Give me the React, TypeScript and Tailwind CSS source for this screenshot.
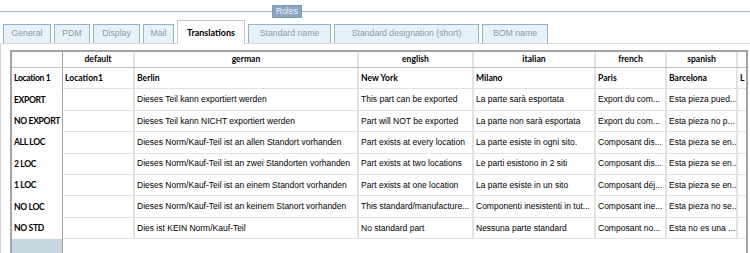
import React from "react";

const cols = [
  { key: "default", w: "w-[72px]" },
  { key: "german", w: "w-[224px]" },
  { key: "english", w: "w-[115px]" },
  { key: "italian", w: "w-[122px]" },
  { key: "french", w: "w-[71px]" },
  { key: "spanish", w: "w-[71px]" },
];

const rows: { label: string; cells: string[]; bold?: boolean }[] = [
  { label: "Location 1", bold: true, cells: ["Location1", "Berlin", "New York", "Milano", "Paris", "Barcelona", "L"] },
  { label: "EXPORT", cells: ["", "Dieses Teil kann exportiert werden", "This part can be exported", "La parte sarà esportata", "Export du com...", "Esta pieza pued...", ""] },
  { label: "NO EXPORT", cells: ["", "Dieses Teil kann NICHT exportiert werden", "Part will NOT be exported", "La parte non sarà esportata", "Export du com...", "Esta pieza no p...", ""] },
  { label: "ALL LOC", cells: ["", "Dieses Norm/Kauf-Teil ist an allen Standort vorhanden", "Part exists at every location", "La parte esiste in ogni sito.", "Composant dis...", "Esta pieza se en...", ""] },
  { label: "2 LOC", cells: ["", "Dieses Norm/Kauf-Teil ist an zwei Standorten vorhanden", "Part exists at two locations", "Le parti esistono in 2 siti", "Composant dis...", "Esta pieza se en...", ""] },
  { label: "1 LOC", cells: ["", "Dieses Norm/Kauf-Teil ist an einem Standort vorhanden", "Part exists at one location", "La parte esiste in un sito", "Composant déj...", "Esta pieza se en...", ""] },
  { label: "NO LOC", cells: ["", "Dieses Norm/Kauf-Teil ist an keinem Stanort vorhanden", "This standard/manufacture...", "Componenti inesistenti in tut...", "Composant ine...", "Esta pieza no se...", ""] },
  { label: "NO STD", cells: ["", "Dies ist KEIN Norm/Kauf-Teil", "No standard part", "Nessuna parte standard", "Composant no...", "Esta no es una ...", ""] },
];

const tabs = ["General", "PDM", "Display", "Mail", "Translations", "Standard name", "Standard designation (short)", "BOM name"];
const tabW = ["w-[48px]", "w-[36px]", "w-[47px]", "w-[31px]", "w-[68px]", "w-[83px]", "w-[145px]", "w-[66px]"];

const boldFont = "font-bold font-['Lato',sans-serif] text-[8.6px]";

export default function App() {
  return (
    <div className="w-[750px] h-[253px] bg-white overflow-hidden flex flex-col text-[8.5px] text-black" style={{ fontFamily: '"Liberation Sans", Arial, sans-serif' }}>
      {/* Roles separator */}
      <div className="flex items-center h-[21px] pt-[1px]">
        <div className="w-[272px] h-px bg-[#a5bace]" />
        <div className="h-[13px] px-[3px] bg-[#8ba6c0] border border-[#7c97b2] text-[#eef3f8] leading-[11px]">Roles</div>
        <div className="flex-1 h-px bg-[#a5bace]" />
      </div>

      {/* Tabs */}
      <div className="flex items-end gap-[3px] pl-[3px] h-[23px] border-b border-[#d9d9d9]">
        {tabs.map((t, i) =>
          t === "Translations" ? (
            <div key={t} className={`${tabW[i]} h-[24px] -mb-px bg-white border border-b-0 border-[#c8c8c8] flex items-center justify-center font-bold font-['Lato',sans-serif] text-[9px]`}>
              {t}
            </div>
          ) : (
            <div key={t} className={`${tabW[i]} h-[19px] bg-[#e7f2f8] border border-b-0 border-[#92b2c8] flex items-center justify-center text-[#8c9aa7] text-[8.7px]`}>
              {t}
            </div>
          )
        )}
      </div>

      {/* Content */}
      <div className="flex-1 flex">
        <div className="w-[3px] border-r border-[#d4d4d4]" />
        <div className="flex-1 pl-[9px] pt-[6px] pr-[3px]">
          <div className="h-full border-2 border-b-0 border-[#a3a3a3] flex flex-col">
            {/* header row */}
            <div className={`flex h-[16px] border-b border-[#c4c4c4] ${boldFont}`}>
              <div className="w-[51px] border-r border-[#a3a3a3]" />
              {cols.map((c) => (
                <div key={c.key} className={`${c.w} border-r-2 border-[#e2e2e2] flex items-center justify-center`}>
                  {c.key}
                </div>
              ))}
              <div className="flex-1" />
            </div>
            {rows.map((r) => (
              <div key={r.label} className="flex h-[21.4px]">
                <div className="w-[51px] border-r border-[#a3a3a3] flex items-center pl-[2px] whitespace-nowrap overflow-hidden font-bold font-['Lato',sans-serif] text-[8.6px] tracking-[-0.35px]">
                  {r.label}
                </div>
                {cols.map((c, i) => (
                  <div key={c.key} className={`${c.w} border-r-2 border-b border-[#e2e2e2] flex items-center px-[2px] whitespace-nowrap overflow-hidden ${r.bold ? boldFont : ""}`}>
                    {r.cells[i]}
                  </div>
                ))}
                <div className={`flex-1 border-b border-[#e2e2e2] flex items-center px-[2px] overflow-hidden ${r.bold ? boldFont : ""}`}>
                  {r.cells[6]}
                </div>
              </div>
            ))}
            <div className="flex-1 flex">
              <div className="w-[51px] border-r border-[#a3a3a3] bg-[#c8d6df]" />
              <div className="flex-1" />
            </div>
          </div>
        </div>
      </div>
    </div>
  );
}
